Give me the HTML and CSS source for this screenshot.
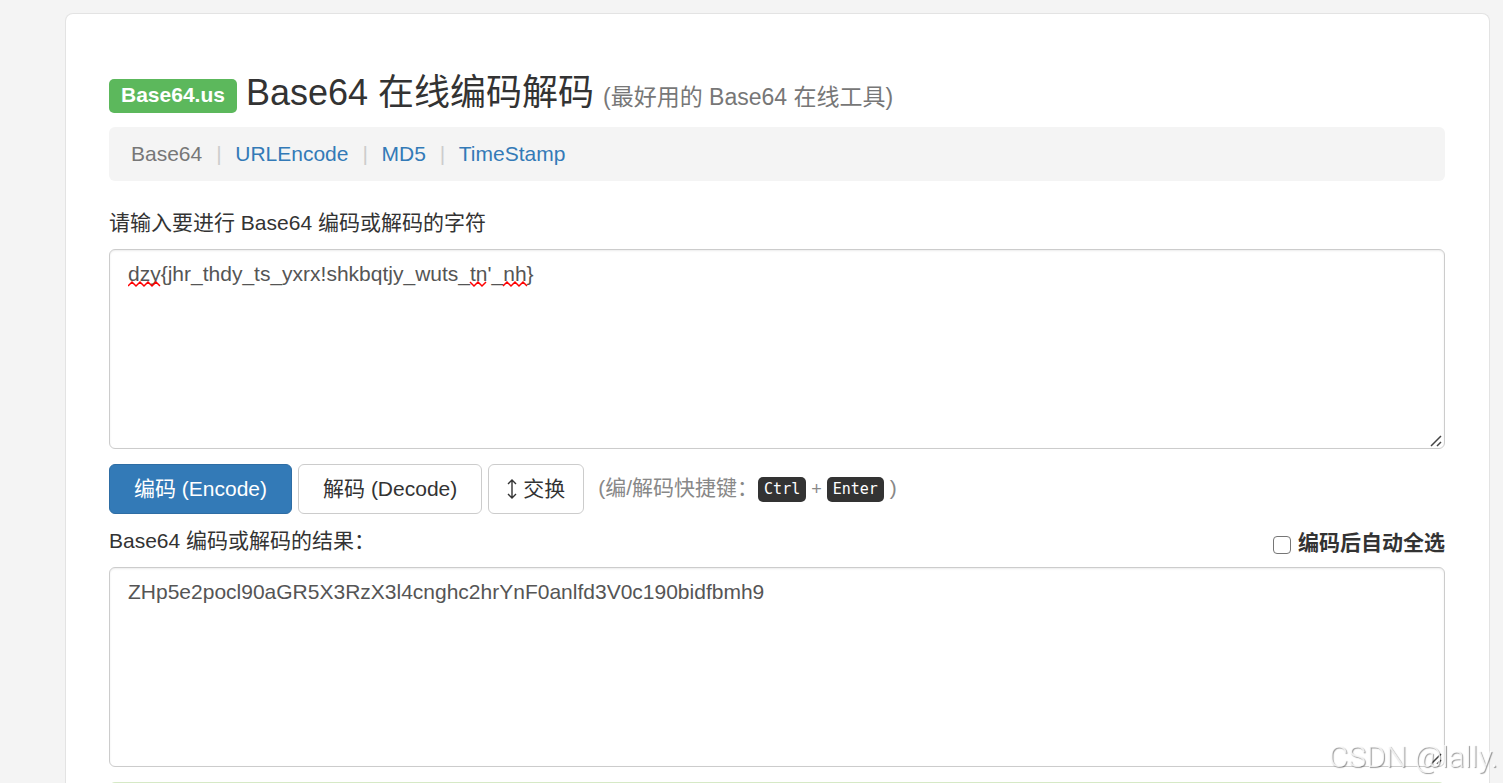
FILE: index.html
```html
<!DOCTYPE html>
<html lang="zh-CN">
    <head>
        <meta charset="UTF-8">
        <title>Base64 在线编码解码</title>
        <link rel="stylesheet" href="styles.css">
    </head>
    <body>
        <main class="panel">
            <h1 class="title">
                <a class="badge" href="#">Base64.us</a>
                <span>Base64 在线编码解码</span>
                <small>(最好用的 Base64 在线工具)</small>
            </h1>
            <nav class="tools">
                <span>Base64</span>
                <i>|</i>
                <a href="#">URLEncode</a>
                <i>|</i>
                <a href="#">MD5</a>
                <i>|</i>
                <a href="#">TimeStamp</a>
            </nav>
            <label class="input-label" for="input">请输入要进行 Base64 编码或解码的字符</label>
            <div class="field">
                <textarea id="input" class="text" spellcheck="false">dzy{jhr_thdy_ts_yxrx!shkbqtjy_wuts_tn'_nh}</textarea>
                <!-- spelling marks -->
                <svg class="marks" width="410" height="8" viewBox="0 0 410 8" fill="none" stroke="#f00" stroke-width="1.5">
                    <path d="M0 6l4-4 4 4 4-4 4 4 4-4 4 4 4-4 4 4"/>
                    <path d="M342 2l4 4 4-4 4 4 4-4"/>
                    <path d="M375 6l4-4 4 4 4-4 4 4 4-4 4 4"/>
                </svg>
            </div>
            <div class="actions">
                <button class="btn primary" type="button">编码 (Encode)</button>
                <button class="btn" type="button">解码 (Decode)</button>
                <button class="btn swap" type="button">
                    <svg width="10" height="20" viewBox="0 0 10 20" fill="none" stroke="#333" stroke-width="1.4">
                        <path d="M5 1v18M1 5l4-4 4 4M1 15l4 4 4-4"/>
                    </svg>
                    交换
                </button>
                <span class="hint">(编/解码快捷键：<kbd>Ctrl</kbd><span class="plus">+</span><kbd>Enter</kbd> )</span>
            </div>
            <div class="result-head">
                <label for="result">Base64 编码或解码的结果：</label>
                <label class="auto"><input type="checkbox"> 编码后自动全选</label>
            </div>
            <div class="field">
                <textarea id="result" class="text" spellcheck="false">ZHp5e2pocl90aGR5X3RzX3l4cnghc2hrYnF0anlfd3V0c190bidfbmh9</textarea>
            </div>
            <div class="alert"></div>
        </main>
        <div class="watermark">CSDN @lally.</div>
    </body>
</html>
```
FILE: styles.css
```css
*{
    box-sizing: border-box;
}
html, body{
    height: 100%;
}
body{
    margin: 0;
    padding: 13px 13px 0 65px;
    overflow: hidden;
    background-color: #f4f4f4;
    color: #333;
    font-family: "Liberation Sans", "Noto Sans CJK SC", sans-serif;
    font-size: 21px;
    line-height: 30px;
}
a{
    color: #337ab7;
    text-decoration: none;
}
.panel{
    min-height: 100%;
    padding: 56px 44px 0 43px;
    border: 1px solid #e3e3e3;
    border-bottom: 0;
    border-radius: 8px 8px 0 0;
    background-color: #fff;
}
.title{
    display: flex;
    align-items: baseline;
    gap: 9px;
    margin: 0 0 7px;
    font-size: 36px;
    font-weight: normal;
    line-height: 45px;
}
.title small{
    color: #777;
    font-size: 23px;
}
.badge{
    align-self: flex-start;
    margin-top: 9px;
    padding: 0 12px 2px;
    border-radius: 5px;
    background-color: #5cb85c;
    color: #fff;
    font-size: 21px;
    font-weight: bold;
    line-height: 32px;
}
.tools{
    display: flex;
    gap: 14px;
    padding: 12px 22px;
    border-radius: 6px;
    background-color: #f4f4f4;
    color: #777;
}
.tools i{
    width: 5px;
    color: #ccc;
    font-style: normal;
}
.input-label{
    display: block;
    margin: 27px 0 11px;
}
.field{
    position: relative;
}
.text{
    display: block;
    width: 100%;
    height: 200px;
    padding: 9px 18px;
    border: 1px solid #ccc;
    border-radius: 6px;
    box-shadow: inset 0 1px 2px rgba(0, 0, 0, 0.08);
    background-color: #fff;
    color: #555;
    font: inherit;
    outline: none;
    resize: vertical;
}
.text::-webkit-resizer{
    background: url("data:image/svg+xml,%3Csvg xmlns='http://www.w3.org/2000/svg' viewBox='0 0 15 15'%3E%3Cpath d='M2 13L12 3M8 13l4-4' fill='none' stroke='%23444' stroke-width='1.5'/%3E%3C/svg%3E") no-repeat;
}
.marks{
    position: absolute;
    left: 19px;
    top: 31px;
    pointer-events: none;
}
.actions{
    display: flex;
    align-items: center;
    gap: 6px;
    margin-top: 15px;
}
.btn{
    height: 50px;
    padding: 0 24px;
    border: 1px solid #ccc;
    border-radius: 6px;
    background-color: #fff;
    color: #333;
    font: inherit;
    cursor: pointer;
}
.primary{
    border-color: #2e6da4;
    background-color: #337ab7;
    color: #fff;
}
.swap{
    display: flex;
    align-items: center;
    gap: 6px;
    padding: 0 18px;
}
.hint{
    margin-left: 8px;
    padding-bottom: 2px;
    color: #888;
}
.hint kbd{
    display: inline-block;
    padding: 0 6px;
    border-radius: 5px;
    background-color: #333;
    color: #fff;
    font-family: "DejaVu Sans Mono", monospace;
    font-size: 15px;
    line-height: 25px;
    vertical-align: 1px;
}
.plus{
    margin: 0 5px;
    font-size: 18px;
}
.result-head{
    display: flex;
    align-items: flex-start;
    justify-content: space-between;
    margin: 12px 0 9px;
}
.auto{
    display: flex;
    align-items: center;
    gap: 7px;
    padding-top: 2px;
    font-weight: bold;
}
.auto input{
    appearance: none;
    width: 18px;
    height: 18px;
    margin: 3px 0 0;
    border: 1px solid #767676;
    border-radius: 4px;
    background-color: #fff;
}
.auto input:checked{
    background-color: #337ab7;
}
.alert{
    height: 60px;
    margin-top: 15px;
    border: 1px solid #d6e9c6;
    border-radius: 6px;
    background-color: #dff0d8;
}
.watermark{
    position: fixed;
    right: 5px;
    bottom: 11px;
    color: rgba(255, 255, 255, 0.8);
    font-family: Roboto, sans-serif;
    font-size: 30px;
    font-weight: 300;
    text-shadow: 1px 1px 1px rgba(0, 0, 0, 0.4);
    pointer-events: none;
}
```
